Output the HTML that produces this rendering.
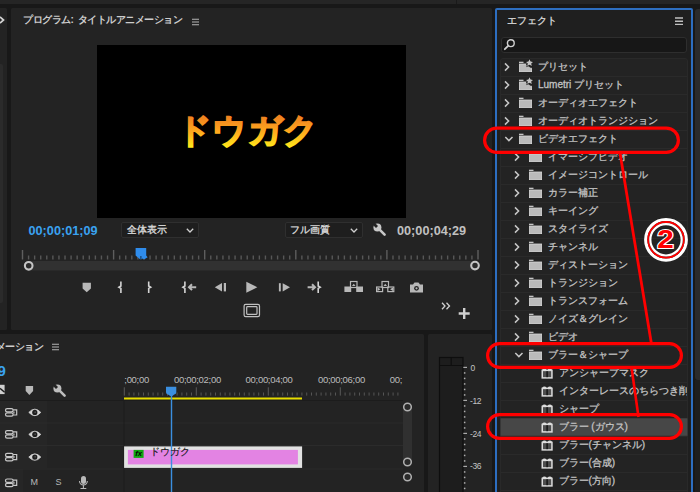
<!DOCTYPE html>
<html lang="ja"><head><meta charset="utf-8"><style>
*{margin:0;padding:0;box-sizing:border-box}
html,body{width:700px;height:492px;overflow:hidden;background:#181818;font-family:"Liberation Sans",sans-serif;color:#bdbdbd}
.a{position:absolute}
.p{position:absolute;background:#232323}
.t{position:absolute;white-space:nowrap;line-height:1}
svg{position:absolute;overflow:visible}
</style></head>
<body>
<div class="a" style="left:0px;top:0px;width:700px;height:4px;background:#252525;"></div>
<div class="a" style="left:456px;top:0px;width:1px;height:4px;background:#1a1a1a;"></div>
<div class="a" style="left:0px;top:8px;width:7px;height:322px;background:#232323;border-radius:0 1.5px 1.5px 0"></div>
<div class="a" style="left:0px;top:64px;width:2.5px;height:239px;background:#2b2b2b;border-radius:0 2px 2px 0"></div>
<svg style="left:0px;top:15.5px;" width="6" height="10" viewBox="0 0 6 10"><path d="M0 1 L3.5 4 L0 7" stroke="#d4d4d4" stroke-width="1.7" fill="none"/></svg>
<div class="a" style="left:10.5px;top:8px;width:481.5px;height:322px;background:#232323;border-radius:1.5px"></div>
<div class="t" style="left:23px;top:15.2px;font-size:10px;color:#cccccc;font-weight:bold;letter-spacing:-0.5px">プログラム:&nbsp; タイトルアニメーション</div>
<svg style="left:192px;top:18px;" width="8" height="8" viewBox="0 0 8 8"><path d="M0 1.3h7M0 4.05h7M0 6.8h7" stroke="#b5b5b5" stroke-width="1.1"/></svg>
<div class="a" style="left:97px;top:45px;width:309px;height:173px;background:#000;"></div>
<svg style="left:0px;top:0px;" width="700" height="492" viewBox="0 0 700 492"><defs><linearGradient id="dg" x1="0" y1="116" x2="0" y2="147" gradientUnits="userSpaceOnUse"><stop offset="0" stop-color="#ee8020"/><stop offset="0.5" stop-color="#ffa81e"/><stop offset="1" stop-color="#ffe81a"/></linearGradient></defs><text x="176.8" y="142.3" font-family="Liberation Sans, sans-serif" font-weight="bold" font-size="34" letter-spacing="0.5" fill="url(#dg)" stroke="url(#dg)" stroke-width="1.6">ドウガク</text></svg>
<div class="t" style="left:28.5px;top:224.9px;font-size:12.7px;color:#3aa2f0;font-weight:bold">00;00;01;09</div>
<div class="a" style="left:121px;top:222px;width:78px;height:15.5px;background:#1e1e1e;border:1px solid #2f2f2f;border-radius:2px"></div>
<div class="t" style="left:127px;top:224.5px;font-size:10px;color:#dcdcdc;-webkit-text-stroke:0.3px #dcdcdc">全体表示</div>
<svg style="left:186px;top:227.5px;" width="9" height="5" viewBox="0 0 9 5"><path d="M0.8 0.8 L4 4 L7.2 0.8" stroke="#cfcfcf" stroke-width="1.3" fill="none"/></svg>
<div class="a" style="left:284.5px;top:222px;width:78px;height:15.5px;background:#1e1e1e;border:1px solid #2f2f2f;border-radius:2px"></div>
<div class="t" style="left:290px;top:224.5px;font-size:10px;color:#dcdcdc;-webkit-text-stroke:0.3px #dcdcdc">フル画質</div>
<svg style="left:349.5px;top:227.5px;" width="9" height="5" viewBox="0 0 9 5"><path d="M0.8 0.8 L4 4 L7.2 0.8" stroke="#cfcfcf" stroke-width="1.3" fill="none"/></svg>
<svg style="left:373px;top:223px;" width="14" height="13" viewBox="0 0 14 13"><circle cx="4.4" cy="4.4" r="4" fill="#c8c8c8"/><path d="M4.6 4.6 L11.6 11.6" stroke="#c8c8c8" stroke-width="2.6" stroke-linecap="round"/><path d="M-0.5 -0.5 L4 4" stroke="#232323" stroke-width="2.8"/></svg>
<div class="t" style="left:397px;top:224.9px;font-size:12.7px;color:#c0c0c0;font-weight:bold">00;00;04;29</div>
<svg style="left:0px;top:0px;" width="492" height="330" viewBox="0 0 492 330"><rect x="21.80" y="250" width="1.4" height="9.5" fill="#5e5e5e"/><rect x="27.87" y="255.5" width="1.4" height="4" fill="#575757"/><rect x="33.95" y="255.5" width="1.4" height="4" fill="#575757"/><rect x="40.02" y="255.5" width="1.4" height="4" fill="#575757"/><rect x="46.09" y="255.5" width="1.4" height="4" fill="#575757"/><rect x="52.17" y="255.5" width="1.4" height="4" fill="#575757"/><rect x="58.24" y="255.5" width="1.4" height="4" fill="#575757"/><rect x="64.31" y="255.5" width="1.4" height="4" fill="#575757"/><rect x="70.39" y="255.5" width="1.4" height="4" fill="#575757"/><rect x="76.46" y="255.5" width="1.4" height="4" fill="#575757"/><rect x="82.53" y="255.5" width="1.4" height="4" fill="#575757"/><rect x="88.61" y="255.5" width="1.4" height="4" fill="#575757"/><rect x="94.68" y="255.5" width="1.4" height="4" fill="#575757"/><rect x="100.75" y="255.5" width="1.4" height="4" fill="#575757"/><rect x="106.83" y="255.5" width="1.4" height="4" fill="#575757"/><rect x="112.90" y="250" width="1.4" height="9.5" fill="#5e5e5e"/><rect x="118.97" y="255.5" width="1.4" height="4" fill="#575757"/><rect x="125.05" y="255.5" width="1.4" height="4" fill="#575757"/><rect x="131.12" y="255.5" width="1.4" height="4" fill="#575757"/><rect x="137.19" y="255.5" width="1.4" height="4" fill="#575757"/><rect x="143.27" y="255.5" width="1.4" height="4" fill="#575757"/><rect x="149.34" y="255.5" width="1.4" height="4" fill="#575757"/><rect x="155.41" y="255.5" width="1.4" height="4" fill="#575757"/><rect x="161.49" y="255.5" width="1.4" height="4" fill="#575757"/><rect x="167.56" y="255.5" width="1.4" height="4" fill="#575757"/><rect x="173.63" y="255.5" width="1.4" height="4" fill="#575757"/><rect x="179.71" y="255.5" width="1.4" height="4" fill="#575757"/><rect x="185.78" y="255.5" width="1.4" height="4" fill="#575757"/><rect x="191.85" y="255.5" width="1.4" height="4" fill="#575757"/><rect x="197.93" y="255.5" width="1.4" height="4" fill="#575757"/><rect x="204.00" y="250" width="1.4" height="9.5" fill="#5e5e5e"/><rect x="210.07" y="255.5" width="1.4" height="4" fill="#575757"/><rect x="216.15" y="255.5" width="1.4" height="4" fill="#575757"/><rect x="222.22" y="255.5" width="1.4" height="4" fill="#575757"/><rect x="228.29" y="255.5" width="1.4" height="4" fill="#575757"/><rect x="234.37" y="255.5" width="1.4" height="4" fill="#575757"/><rect x="240.44" y="255.5" width="1.4" height="4" fill="#575757"/><rect x="246.51" y="255.5" width="1.4" height="4" fill="#575757"/><rect x="252.59" y="255.5" width="1.4" height="4" fill="#575757"/><rect x="258.66" y="255.5" width="1.4" height="4" fill="#575757"/><rect x="264.73" y="255.5" width="1.4" height="4" fill="#575757"/><rect x="270.81" y="255.5" width="1.4" height="4" fill="#575757"/><rect x="276.88" y="255.5" width="1.4" height="4" fill="#575757"/><rect x="282.95" y="255.5" width="1.4" height="4" fill="#575757"/><rect x="289.03" y="255.5" width="1.4" height="4" fill="#575757"/><rect x="295.10" y="250" width="1.4" height="9.5" fill="#5e5e5e"/><rect x="301.17" y="255.5" width="1.4" height="4" fill="#575757"/><rect x="307.25" y="255.5" width="1.4" height="4" fill="#575757"/><rect x="313.32" y="255.5" width="1.4" height="4" fill="#575757"/><rect x="319.39" y="255.5" width="1.4" height="4" fill="#575757"/><rect x="325.47" y="255.5" width="1.4" height="4" fill="#575757"/><rect x="331.54" y="255.5" width="1.4" height="4" fill="#575757"/><rect x="337.61" y="255.5" width="1.4" height="4" fill="#575757"/><rect x="343.69" y="255.5" width="1.4" height="4" fill="#575757"/><rect x="349.76" y="255.5" width="1.4" height="4" fill="#575757"/><rect x="355.83" y="255.5" width="1.4" height="4" fill="#575757"/><rect x="361.91" y="255.5" width="1.4" height="4" fill="#575757"/><rect x="367.98" y="255.5" width="1.4" height="4" fill="#575757"/><rect x="374.05" y="255.5" width="1.4" height="4" fill="#575757"/><rect x="380.13" y="255.5" width="1.4" height="4" fill="#575757"/><rect x="386.20" y="250" width="1.4" height="9.5" fill="#5e5e5e"/><rect x="392.27" y="255.5" width="1.4" height="4" fill="#575757"/><rect x="398.35" y="255.5" width="1.4" height="4" fill="#575757"/><rect x="404.42" y="255.5" width="1.4" height="4" fill="#575757"/><rect x="410.49" y="255.5" width="1.4" height="4" fill="#575757"/><rect x="416.57" y="255.5" width="1.4" height="4" fill="#575757"/><rect x="422.64" y="255.5" width="1.4" height="4" fill="#575757"/><rect x="428.71" y="255.5" width="1.4" height="4" fill="#575757"/><rect x="434.79" y="255.5" width="1.4" height="4" fill="#575757"/><rect x="440.86" y="255.5" width="1.4" height="4" fill="#575757"/><rect x="446.93" y="255.5" width="1.4" height="4" fill="#575757"/><rect x="453.01" y="255.5" width="1.4" height="4" fill="#575757"/><rect x="459.08" y="255.5" width="1.4" height="4" fill="#575757"/><rect x="465.15" y="255.5" width="1.4" height="4" fill="#575757"/><rect x="471.23" y="255.5" width="1.4" height="4" fill="#575757"/><rect x="477.30" y="250" width="1.4" height="9.5" fill="#5e5e5e"/><rect x="29" y="261" width="446" height="9.5" fill="#313131"/><circle cx="28.7" cy="265.8" r="3.8" stroke="#c4c4c4" stroke-width="2.1" fill="#2a2a2a"/><circle cx="475" cy="265.6" r="3.8" stroke="#c4c4c4" stroke-width="2.1" fill="#2a2a2a"/><path d="M135.6 248.1 H146.2 V255.5 L147.6 257.2 L144 259.6 L142.6 258.4 L141.6 259.3 L140 259.3 L135.6 255.5 Z" fill="#2f8ceb"/><rect x="140.4" y="256" width="1" height="3.3" fill="#16324f"/></svg>
<svg style="left:0px;top:0px;" width="492" height="330" viewBox="0 0 492 330"><path d="M82.6 282.8 H90.9 V288.5 L86.75 292.3 L82.6 288.5 Z" fill="#b8b8b8"/><path d="M120.9 281.5 V286 L118.9 287.2 L120.9 288.4 V293" stroke="#d4d4d4" stroke-width="1.6" fill="none"/><path d="M148.70000000000002 281.5 V286 L150.70000000000002 287.2 L148.70000000000002 288.4 V293" stroke="#d4d4d4" stroke-width="1.6" fill="none"/><path d="M184.9 281.5 V286 L182.9 287.2 L184.9 288.4 V293" stroke="#d4d4d4" stroke-width="1.6" fill="none"/><path d="M196.2 287.2 H189.5 M192 284.3 L189 287.2 L192 290.1" stroke="#b8b8b8" stroke-width="2" fill="none"/><path d="M222 283 V291.4 L214.8 287.2 Z" fill="#b8b8b8"/><rect x="223.8" y="283" width="2.2" height="8.4" fill="#b8b8b8"/><path d="M246.3 281.8 V292.7 L257.3 287.25 Z" fill="#b8b8b8"/><rect x="278.9" y="283.2" width="1.9" height="8.2" fill="#b8b8b8"/><path d="M282.7 283.2 V291.4 L290 287.3 Z" fill="#b8b8b8"/><path d="M307.6 287.2 H314.5 M312 284.3 L315 287.2 L312 290.1" stroke="#b8b8b8" stroke-width="2" fill="none"/><path d="M318.2 281.5 V286 L320.2 287.2 L318.2 288.4 V293" stroke="#d4d4d4" stroke-width="1.6" fill="none"/><rect x="350.5" y="281.5" width="6.5" height="6" fill="none" stroke="#b8b8b8" stroke-width="1.2"/><path d="M352 286 L353.75 283.8 L355.5 286Z" fill="#b8b8b8"/><rect x="344.4" y="286.5" width="6.8" height="5.5" fill="#b8b8b8"/><rect x="356.2" y="286.5" width="6.8" height="5.5" fill="#b8b8b8"/><rect x="382" y="281.5" width="6.5" height="6" fill="none" stroke="#b8b8b8" stroke-width="1.2"/><path d="M383.5 286 L385.25 283.8 L387 286Z" fill="#b8b8b8"/><rect x="376.6" y="287" width="6" height="4.6" fill="none" stroke="#b8b8b8" stroke-width="1.2"/><rect x="387.8" y="287" width="6" height="4.6" fill="none" stroke="#b8b8b8" stroke-width="1.2"/><path d="M377.5 287.5 L380.5 289.3 L377.5 291Z M393 287.5 L390 289.3 L393 291Z" fill="#b8b8b8"/><path d="M410 284.5 H413 L414.5 282.5 H418.5 L420 284.5 H423 V292.6 H410 Z" fill="#b8b8b8"/><circle cx="416.5" cy="288.3" r="2.4" fill="#232323"/><circle cx="416.5" cy="288.3" r="1.1" fill="#b8b8b8"/><rect x="244.1" y="304.3" width="15.4" height="12.3" rx="1.6" fill="none" stroke="#c0c0c0" stroke-width="1.2"/><rect x="246.7" y="306.7" width="10.3" height="7.6" rx="0.8" fill="none" stroke="#c0c0c0" stroke-width="1.2"/><path d="M442 302.8 L445 306 L442 309.2 M446.5 302.8 L449.5 306 L446.5 309.2" stroke="#d0d0d0" stroke-width="1.3" fill="none"/><path d="M464.2 308 V319 M458.7 313.5 H469.7" stroke="#d0d0d0" stroke-width="2.4"/></svg>
<div class="a" style="left:0px;top:334px;width:424px;height:158px;background:#232323;border-radius:0 1.5px 0 0"></div>
<div class="t" style="left:-62px;top:341.5px;font-size:10px;color:#cccccc;font-weight:bold;letter-spacing:-0.4px">タイトルアニメーション</div>
<svg style="left:52px;top:343px;" width="8" height="8" viewBox="0 0 8 8"><path d="M0 1.3h7M0 4.05h7M0 6.8h7" stroke="#b5b5b5" stroke-width="1.1"/></svg>
<div class="t" style="left:-76px;top:363.3px;font-size:15px;color:#3aa2f0;font-weight:bold">00;00;01;09</div>
<svg style="left:53px;top:384px;" width="14" height="14" viewBox="0 0 14 14"><circle cx="4.4" cy="4.4" r="4" fill="#bdbdbd"/><path d="M4.6 4.6 L11.6 11.6" stroke="#bdbdbd" stroke-width="2.6" stroke-linecap="round"/><path d="M-0.5 -0.5 L4 4" stroke="#232323" stroke-width="2.8"/></svg>
<svg style="left:0px;top:0px;" width="424" height="492" viewBox="0 0 424 492"><path d="M0 384.8 H4.6 V394.1 H0 Z" fill="#d0d0d0"/><path d="M0 388.2 L4.6 392.2" stroke="#1a1a1a" stroke-width="1.4"/><path d="M25.7 386 H33.1 V391 L29.4 394.9 L25.7 391 Z" fill="#b8b8b8"/><rect x="0" y="401" width="47" height="67" fill="#262626"/><rect x="0" y="469" width="23" height="23" fill="#262626"/><rect x="0" y="400" width="403" height="1" fill="#1c1c1c"/><rect x="0" y="422.5" width="403" height="1" fill="#2b2b2b"/><rect x="0" y="445" width="403" height="1" fill="#2b2b2b"/><rect x="0" y="468.5" width="403" height="1" fill="#2b2b2b"/><rect x="123.5" y="400" width="1" height="92" fill="#1c1c1c"/><rect x="123.80" y="387.3" width="1" height="8.3" fill="#5a5a5a"/><rect x="128.60" y="392.5" width="1" height="3.1" fill="#555"/><rect x="133.40" y="392.5" width="1" height="3.1" fill="#555"/><rect x="138.20" y="392.5" width="1" height="3.1" fill="#555"/><rect x="143.00" y="392.5" width="1" height="3.1" fill="#555"/><rect x="147.80" y="392.5" width="1" height="3.1" fill="#555"/><rect x="152.60" y="392.5" width="1" height="3.1" fill="#555"/><rect x="157.40" y="392.5" width="1" height="3.1" fill="#555"/><rect x="162.20" y="392.5" width="1" height="3.1" fill="#555"/><rect x="167.00" y="392.5" width="1" height="3.1" fill="#555"/><rect x="171.80" y="392.5" width="1" height="3.1" fill="#555"/><rect x="176.60" y="392.5" width="1" height="3.1" fill="#555"/><rect x="181.40" y="392.5" width="1" height="3.1" fill="#555"/><rect x="186.20" y="392.5" width="1" height="3.1" fill="#555"/><rect x="191.00" y="392.5" width="1" height="3.1" fill="#555"/><rect x="195.80" y="387.3" width="1" height="8.3" fill="#5a5a5a"/><rect x="200.60" y="392.5" width="1" height="3.1" fill="#555"/><rect x="205.40" y="392.5" width="1" height="3.1" fill="#555"/><rect x="210.20" y="392.5" width="1" height="3.1" fill="#555"/><rect x="215.00" y="392.5" width="1" height="3.1" fill="#555"/><rect x="219.80" y="392.5" width="1" height="3.1" fill="#555"/><rect x="224.60" y="392.5" width="1" height="3.1" fill="#555"/><rect x="229.40" y="392.5" width="1" height="3.1" fill="#555"/><rect x="234.20" y="392.5" width="1" height="3.1" fill="#555"/><rect x="239.00" y="392.5" width="1" height="3.1" fill="#555"/><rect x="243.80" y="392.5" width="1" height="3.1" fill="#555"/><rect x="248.60" y="392.5" width="1" height="3.1" fill="#555"/><rect x="253.40" y="392.5" width="1" height="3.1" fill="#555"/><rect x="258.20" y="392.5" width="1" height="3.1" fill="#555"/><rect x="263.00" y="392.5" width="1" height="3.1" fill="#555"/><rect x="267.80" y="387.3" width="1" height="8.3" fill="#5a5a5a"/><rect x="272.60" y="392.5" width="1" height="3.1" fill="#555"/><rect x="277.40" y="392.5" width="1" height="3.1" fill="#555"/><rect x="282.20" y="392.5" width="1" height="3.1" fill="#555"/><rect x="287.00" y="392.5" width="1" height="3.1" fill="#555"/><rect x="291.80" y="392.5" width="1" height="3.1" fill="#555"/><rect x="296.60" y="392.5" width="1" height="3.1" fill="#555"/><rect x="301.40" y="392.5" width="1" height="3.1" fill="#555"/><rect x="306.20" y="392.5" width="1" height="3.1" fill="#555"/><rect x="311.00" y="392.5" width="1" height="3.1" fill="#555"/><rect x="315.80" y="392.5" width="1" height="3.1" fill="#555"/><rect x="320.60" y="392.5" width="1" height="3.1" fill="#555"/><rect x="325.40" y="392.5" width="1" height="3.1" fill="#555"/><rect x="330.20" y="392.5" width="1" height="3.1" fill="#555"/><rect x="335.00" y="392.5" width="1" height="3.1" fill="#555"/><rect x="339.80" y="387.3" width="1" height="8.3" fill="#5a5a5a"/><rect x="344.60" y="392.5" width="1" height="3.1" fill="#555"/><rect x="349.40" y="392.5" width="1" height="3.1" fill="#555"/><rect x="354.20" y="392.5" width="1" height="3.1" fill="#555"/><rect x="359.00" y="392.5" width="1" height="3.1" fill="#555"/><rect x="363.80" y="392.5" width="1" height="3.1" fill="#555"/><rect x="368.60" y="392.5" width="1" height="3.1" fill="#555"/><rect x="373.40" y="392.5" width="1" height="3.1" fill="#555"/><rect x="378.20" y="392.5" width="1" height="3.1" fill="#555"/><rect x="383.00" y="392.5" width="1" height="3.1" fill="#555"/><rect x="387.80" y="392.5" width="1" height="3.1" fill="#555"/><rect x="392.60" y="392.5" width="1" height="3.1" fill="#555"/><rect x="397.40" y="392.5" width="1" height="3.1" fill="#555"/><rect x="124" y="397.5" width="178" height="2" fill="#e6dc00"/><rect x="124.1" y="446.4" width="178" height="21.5" fill="#e2e2e2"/><rect x="127.9" y="449.9" width="170" height="14.5" fill="#e383e3"/><rect x="133.6" y="449.9" width="10" height="8" fill="#12a812"/><rect x="403" y="403" width="9" height="63" rx="4.5" fill="#303030"/><circle cx="407.5" cy="407" r="3.8" stroke="#b0b0b0" stroke-width="1.5" fill="#2a2a2a"/><circle cx="407.5" cy="462" r="3.8" stroke="#b0b0b0" stroke-width="1.5" fill="#2a2a2a"/><circle cx="407.5" cy="477" r="3.8" stroke="#b0b0b0" stroke-width="1.5" fill="#2a2a2a"/><rect x="5.5" y="408.59999999999997" width="7.6" height="3.3" rx="1.6" fill="none" stroke="#c8c8c8" stroke-width="1.2"/><rect x="5.5" y="412.9" width="7.6" height="3.3" rx="1.6" fill="none" stroke="#c8c8c8" stroke-width="1.2"/><path d="M13.1 409.79999999999995 H16.7 V415.0 H13.1 M13.9 411.4 V413.4" fill="none" stroke="#c8c8c8" stroke-width="1.2"/><path d="M28.799999999999997 412.4 Q34.8 405.9 40.8 412.4 Q34.8 418.9 28.799999999999997 412.4 Z" fill="#d4d4d4" stroke="#d4d4d4" stroke-width="0.8"/><circle cx="34.8" cy="412.4" r="2.6" fill="#1e1e1e"/><circle cx="35.099999999999994" cy="412.09999999999997" r="0.6" fill="#888"/><rect x="5.5" y="430.59999999999997" width="7.6" height="3.3" rx="1.6" fill="none" stroke="#c8c8c8" stroke-width="1.2"/><rect x="5.5" y="434.9" width="7.6" height="3.3" rx="1.6" fill="none" stroke="#c8c8c8" stroke-width="1.2"/><path d="M13.1 431.79999999999995 H16.7 V437.0 H13.1 M13.9 433.4 V435.4" fill="none" stroke="#c8c8c8" stroke-width="1.2"/><path d="M28.799999999999997 434.4 Q34.8 427.9 40.8 434.4 Q34.8 440.9 28.799999999999997 434.4 Z" fill="#d4d4d4" stroke="#d4d4d4" stroke-width="0.8"/><circle cx="34.8" cy="434.4" r="2.6" fill="#1e1e1e"/><circle cx="35.099999999999994" cy="434.09999999999997" r="0.6" fill="#888"/><rect x="5.5" y="453.3" width="7.6" height="3.3" rx="1.6" fill="none" stroke="#c8c8c8" stroke-width="1.2"/><rect x="5.5" y="457.6" width="7.6" height="3.3" rx="1.6" fill="none" stroke="#c8c8c8" stroke-width="1.2"/><path d="M13.1 454.5 H16.7 V459.70000000000005 H13.1 M13.9 456.1 V458.1" fill="none" stroke="#c8c8c8" stroke-width="1.2"/><path d="M28.799999999999997 457.1 Q34.8 450.6 40.8 457.1 Q34.8 463.6 28.799999999999997 457.1 Z" fill="#d4d4d4" stroke="#d4d4d4" stroke-width="0.8"/><circle cx="34.8" cy="457.1" r="2.6" fill="#1e1e1e"/><circle cx="35.099999999999994" cy="456.8" r="0.6" fill="#888"/><rect x="5.5" y="479.0" width="7.6" height="3.3" rx="1.6" fill="none" stroke="#c8c8c8" stroke-width="1.2"/><rect x="5.5" y="483.3" width="7.6" height="3.3" rx="1.6" fill="none" stroke="#c8c8c8" stroke-width="1.2"/><path d="M13.1 480.2 H16.7 V485.40000000000003 H13.1 M13.9 481.8 V483.8" fill="none" stroke="#c8c8c8" stroke-width="1.2"/><rect x="170.8" y="392" width="1.4" height="100" fill="#3b8fe0"/><path d="M166 386.7 H176.3 V392.3 Q176.3 394 174.3 394.6 L172.3 396 H170.4 L168 394.6 Q166 394 166 392.3 Z" fill="#3b8fe0"/></svg>
<div class="t" style="left:30.5px;top:478px;font-size:9px;color:#b8b8b8;">M</div>
<div class="t" style="left:55.5px;top:478px;font-size:9px;color:#b8b8b8;">S</div>
<svg style="left:0px;top:0px;" width="100" height="492" viewBox="0 0 100 492"><rect x="81" y="476" width="5" height="8" rx="2.5" fill="#b8b8b8"/><path d="M79.5 481 A3.9 3.9 0 0 0 87.3 481 M83.4 485 V488 M80.5 488.5 H86.3" stroke="#b8b8b8" stroke-width="1.1" fill="none"/></svg>
<div class="t" style="left:124.3px;top:375px;font-size:9.5px;color:#bdbdbd;letter-spacing:-0.3px">;00;00</div>
<div class="t" style="left:174px;top:375px;font-size:9.5px;color:#bdbdbd;letter-spacing:-0.3px">00;00;02;00</div>
<div class="t" style="left:245.6px;top:375px;font-size:9.5px;color:#bdbdbd;letter-spacing:-0.3px">00;00;04;00</div>
<div class="t" style="left:318px;top:375px;font-size:9.5px;color:#bdbdbd;letter-spacing:-0.3px">00;00;06;00</div>
<div class="t" style="left:389.7px;top:375px;font-size:9.5px;color:#bdbdbd;letter-spacing:-0.3px">00;</div>
<div class="t" style="left:149.5px;top:447px;font-size:10px;color:#181818;-webkit-text-stroke:0.15px #181818">ドウガク</div>
<div class="t" style="left:135.2px;top:450.3px;font-size:7.5px;color:#050505;font-style:italic;font-weight:bold">fx</div>
<div class="a" style="left:427.5px;top:334px;width:64.5px;height:158px;background:#232323;border-radius:1.5px 1.5px 0 0"></div>
<svg style="left:0px;top:0px;" width="492" height="492" viewBox="0 0 492 492"><rect x="439.5" y="357.5" width="23.5" height="140" fill="#1d1d1d" stroke="#0e0e0e" stroke-width="1.2"/><path d="M439.5 365.5 H463 M451.2 357.5 V365.5" stroke="#0e0e0e" stroke-width="1.2"/><rect x="463.3" y="366.80" width="3.7" height="1.2" fill="#aaa"/><rect x="463.9" y="372.20" width="1.5" height="1.5" fill="#b0b0b0"/><rect x="463.9" y="377.70" width="1.5" height="1.5" fill="#b0b0b0"/><rect x="463.9" y="383.20" width="1.5" height="1.5" fill="#b0b0b0"/><rect x="463.9" y="388.70" width="1.5" height="1.5" fill="#b0b0b0"/><rect x="463.9" y="394.20" width="1.5" height="1.5" fill="#b0b0b0"/><rect x="463.3" y="399.80" width="3.7" height="1.2" fill="#aaa"/><rect x="463.9" y="405.20" width="1.5" height="1.5" fill="#b0b0b0"/><rect x="463.9" y="410.70" width="1.5" height="1.5" fill="#b0b0b0"/><rect x="463.9" y="416.20" width="1.5" height="1.5" fill="#b0b0b0"/><rect x="463.9" y="421.70" width="1.5" height="1.5" fill="#b0b0b0"/><rect x="463.9" y="427.20" width="1.5" height="1.5" fill="#b0b0b0"/><rect x="463.3" y="432.80" width="3.7" height="1.2" fill="#aaa"/><rect x="463.9" y="438.20" width="1.5" height="1.5" fill="#b0b0b0"/><rect x="463.9" y="443.70" width="1.5" height="1.5" fill="#b0b0b0"/><rect x="463.9" y="449.20" width="1.5" height="1.5" fill="#b0b0b0"/><rect x="463.9" y="454.70" width="1.5" height="1.5" fill="#b0b0b0"/><rect x="463.9" y="460.20" width="1.5" height="1.5" fill="#b0b0b0"/><rect x="463.3" y="465.80" width="3.7" height="1.2" fill="#aaa"/><rect x="463.9" y="471.20" width="1.5" height="1.5" fill="#b0b0b0"/><rect x="463.9" y="476.70" width="1.5" height="1.5" fill="#b0b0b0"/><rect x="463.9" y="482.20" width="1.5" height="1.5" fill="#b0b0b0"/><rect x="463.9" y="487.70" width="1.5" height="1.5" fill="#b0b0b0"/></svg>
<div class="t" style="left:470.5px;top:364.3px;font-size:8.5px;color:#c4c4c4;">0</div>
<div class="t" style="left:470px;top:396.8px;font-size:8.5px;color:#c4c4c4;letter-spacing:-0.4px">-12</div>
<div class="t" style="left:470px;top:429.8px;font-size:8.5px;color:#c4c4c4;letter-spacing:-0.4px">-24</div>
<div class="t" style="left:470px;top:462.3px;font-size:8.5px;color:#c4c4c4;letter-spacing:-0.4px">-36</div>
<div class="a" style="left:695px;top:380px;width:10px;height:112px;background:#1e1e1e;"></div>
<div class="a" style="left:695px;top:9px;width:10px;height:371px;background:#2b2b2b;border-radius:3px 0 0 3px"></div>
<div class="a" style="left:495px;top:8px;width:198.2px;height:490px;background:#1f1f1f;border:2px solid #2d6ec0;border-radius:2px 2px 0 0"></div>
<div class="t" style="left:507px;top:15.5px;font-size:10px;color:#cccccc;font-weight:bold">エフェクト</div>
<svg style="left:675px;top:17px;" width="9" height="9" viewBox="0 0 9 9"><path d="M0 1h8M0 4.2h8M0 7.4h8" stroke="#c0c0c0" stroke-width="1.4"/></svg>
<div class="a" style="left:500.5px;top:36.5px;width:186px;height:16.5px;background:#171717;border:1px solid #2e2e2e;border-radius:3px"></div>
<svg style="left:503px;top:38px;" width="13" height="13" viewBox="0 0 13 13"><circle cx="7.8" cy="5.2" r="3.4" stroke="#d0d0d0" stroke-width="1.4" fill="none"/><path d="M5.4 7.6 L1.8 11.2" stroke="#d0d0d0" stroke-width="1.8" stroke-linecap="round"/></svg>
<div class="a" style="left:500px;top:57.5px;width:187.5px;height:440px;background:#232323;border:1px solid #292929;border-radius:3px 3px 0 0"></div>
<svg style="left:0px;top:0px;" width="700" height="492" viewBox="0 0 700 492"><rect x="501" y="76" width="186" height="1" fill="#2a2a2a"/><path d="M505 63.4 L508.6 67 L505 70.6" stroke="#c8c8c8" stroke-width="1.5" fill="none"/><rect x="519" y="61.7" width="4.5" height="1.3" fill="#c4c4c4"/><rect x="519.4" y="64" width="12.2" height="7.6" fill="#bababa" stroke="#d8d8d8" stroke-width="0.8"/><path d="M526.5 63.8 L532 67.2" stroke="#232323" stroke-width="2.2"/><path d="M529.5 59.3 L530.6 61.599999999999994 L533 61.9 L531.2 63.599999999999994 L531.8 66.0 L529.5 64.8 L527.2 66.0 L527.8 63.599999999999994 L526 61.9 L528.4 61.599999999999994 Z" fill="#c4c4c4" stroke="#1c1c1c" stroke-width="1.2" paint-order="stroke"/><rect x="501" y="94" width="186" height="1" fill="#2a2a2a"/><path d="M505 81.4 L508.6 85 L505 88.6" stroke="#c8c8c8" stroke-width="1.5" fill="none"/><rect x="519" y="79.7" width="4.5" height="1.3" fill="#c4c4c4"/><rect x="519.4" y="82" width="12.2" height="7.6" fill="#bababa" stroke="#d8d8d8" stroke-width="0.8"/><path d="M526.5 81.8 L532 85.2" stroke="#232323" stroke-width="2.2"/><path d="M529.5 77.3 L530.6 79.6 L533 79.89999999999999 L531.2 81.6 L531.8 84.0 L529.5 82.8 L527.2 84.0 L527.8 81.6 L526 79.89999999999999 L528.4 79.6 Z" fill="#c4c4c4" stroke="#1c1c1c" stroke-width="1.2" paint-order="stroke"/><rect x="501" y="112" width="186" height="1" fill="#2a2a2a"/><path d="M505 99.4 L508.6 103 L505 106.6" stroke="#c8c8c8" stroke-width="1.5" fill="none"/><rect x="519" y="97.7" width="4.5" height="1.3" fill="#c4c4c4"/><rect x="519.4" y="100" width="12.2" height="7.6" fill="#bababa" stroke="#d8d8d8" stroke-width="0.8"/><rect x="501" y="130" width="186" height="1" fill="#2a2a2a"/><path d="M505 117.4 L508.6 121 L505 124.6" stroke="#c8c8c8" stroke-width="1.5" fill="none"/><rect x="519" y="115.7" width="4.5" height="1.3" fill="#c4c4c4"/><rect x="519.4" y="118" width="12.2" height="7.6" fill="#bababa" stroke="#d8d8d8" stroke-width="0.8"/><rect x="501" y="148" width="186" height="1" fill="#2a2a2a"/><path d="M505.3 137 L508.9 140.6 L512.5 137" stroke="#c8c8c8" stroke-width="1.5" fill="none"/><rect x="519" y="133.7" width="4.5" height="1.3" fill="#c4c4c4"/><rect x="519.4" y="136" width="12.2" height="7.6" fill="#bababa" stroke="#d8d8d8" stroke-width="0.8"/><rect x="501" y="166" width="186" height="1" fill="#2a2a2a"/><path d="M515 153.4 L518.6 157 L515 160.6" stroke="#c8c8c8" stroke-width="1.5" fill="none"/><rect x="529" y="151.7" width="4.5" height="1.3" fill="#c4c4c4"/><rect x="529.4" y="154" width="12.2" height="7.6" fill="#bababa" stroke="#d8d8d8" stroke-width="0.8"/><rect x="501" y="184" width="186" height="1" fill="#2a2a2a"/><path d="M515 171.4 L518.6 175 L515 178.6" stroke="#c8c8c8" stroke-width="1.5" fill="none"/><rect x="529" y="169.7" width="4.5" height="1.3" fill="#c4c4c4"/><rect x="529.4" y="172" width="12.2" height="7.6" fill="#bababa" stroke="#d8d8d8" stroke-width="0.8"/><rect x="501" y="202" width="186" height="1" fill="#2a2a2a"/><path d="M515 189.4 L518.6 193 L515 196.6" stroke="#c8c8c8" stroke-width="1.5" fill="none"/><rect x="529" y="187.7" width="4.5" height="1.3" fill="#c4c4c4"/><rect x="529.4" y="190" width="12.2" height="7.6" fill="#bababa" stroke="#d8d8d8" stroke-width="0.8"/><rect x="501" y="220" width="186" height="1" fill="#2a2a2a"/><path d="M515 207.4 L518.6 211 L515 214.6" stroke="#c8c8c8" stroke-width="1.5" fill="none"/><rect x="529" y="205.7" width="4.5" height="1.3" fill="#c4c4c4"/><rect x="529.4" y="208" width="12.2" height="7.6" fill="#bababa" stroke="#d8d8d8" stroke-width="0.8"/><rect x="501" y="238" width="186" height="1" fill="#2a2a2a"/><path d="M515 225.4 L518.6 229 L515 232.6" stroke="#c8c8c8" stroke-width="1.5" fill="none"/><rect x="529" y="223.7" width="4.5" height="1.3" fill="#c4c4c4"/><rect x="529.4" y="226" width="12.2" height="7.6" fill="#bababa" stroke="#d8d8d8" stroke-width="0.8"/><rect x="501" y="256" width="186" height="1" fill="#2a2a2a"/><path d="M515 243.4 L518.6 247 L515 250.6" stroke="#c8c8c8" stroke-width="1.5" fill="none"/><rect x="529" y="241.7" width="4.5" height="1.3" fill="#c4c4c4"/><rect x="529.4" y="244" width="12.2" height="7.6" fill="#bababa" stroke="#d8d8d8" stroke-width="0.8"/><rect x="501" y="274" width="186" height="1" fill="#2a2a2a"/><path d="M515 261.4 L518.6 265 L515 268.6" stroke="#c8c8c8" stroke-width="1.5" fill="none"/><rect x="529" y="259.7" width="4.5" height="1.3" fill="#c4c4c4"/><rect x="529.4" y="262" width="12.2" height="7.6" fill="#bababa" stroke="#d8d8d8" stroke-width="0.8"/><rect x="501" y="292" width="186" height="1" fill="#2a2a2a"/><path d="M515 279.4 L518.6 283 L515 286.6" stroke="#c8c8c8" stroke-width="1.5" fill="none"/><rect x="529" y="277.7" width="4.5" height="1.3" fill="#c4c4c4"/><rect x="529.4" y="280" width="12.2" height="7.6" fill="#bababa" stroke="#d8d8d8" stroke-width="0.8"/><rect x="501" y="310" width="186" height="1" fill="#2a2a2a"/><path d="M515 297.4 L518.6 301 L515 304.6" stroke="#c8c8c8" stroke-width="1.5" fill="none"/><rect x="529" y="295.7" width="4.5" height="1.3" fill="#c4c4c4"/><rect x="529.4" y="298" width="12.2" height="7.6" fill="#bababa" stroke="#d8d8d8" stroke-width="0.8"/><rect x="501" y="328" width="186" height="1" fill="#2a2a2a"/><path d="M515 315.4 L518.6 319 L515 322.6" stroke="#c8c8c8" stroke-width="1.5" fill="none"/><rect x="529" y="313.7" width="4.5" height="1.3" fill="#c4c4c4"/><rect x="529.4" y="316" width="12.2" height="7.6" fill="#bababa" stroke="#d8d8d8" stroke-width="0.8"/><rect x="501" y="346" width="186" height="1" fill="#2a2a2a"/><path d="M515 333.4 L518.6 337 L515 340.6" stroke="#c8c8c8" stroke-width="1.5" fill="none"/><rect x="529" y="331.7" width="4.5" height="1.3" fill="#c4c4c4"/><rect x="529.4" y="334" width="12.2" height="7.6" fill="#bababa" stroke="#d8d8d8" stroke-width="0.8"/><rect x="501" y="364" width="186" height="1" fill="#2a2a2a"/><path d="M515.3 353 L518.9 356.6 L522.5 353" stroke="#c8c8c8" stroke-width="1.5" fill="none"/><rect x="529" y="349.7" width="4.5" height="1.3" fill="#c4c4c4"/><rect x="529.4" y="352" width="12.2" height="7.6" fill="#bababa" stroke="#d8d8d8" stroke-width="0.8"/><rect x="501" y="382" width="186" height="1" fill="#2a2a2a"/><rect x="542.25" y="370.4" width="9.7" height="7.5" fill="#4e4e4e" stroke="#dcdcdc" stroke-width="1.5"/><rect x="546.4" y="371.2" width="1.4" height="6" fill="#111"/><path d="M542.5 370.4 Q544.4 368 546.3 370.4 M547.9 370.4 Q549.8 368 551.7 370.4" stroke="#dcdcdc" stroke-width="1.4" fill="none"/><rect x="501" y="400" width="186" height="1" fill="#2a2a2a"/><rect x="542.25" y="388.4" width="9.7" height="7.5" fill="#4e4e4e" stroke="#dcdcdc" stroke-width="1.5"/><rect x="546.4" y="389.2" width="1.4" height="6" fill="#111"/><path d="M542.5 388.4 Q544.4 386 546.3 388.4 M547.9 388.4 Q549.8 386 551.7 388.4" stroke="#dcdcdc" stroke-width="1.4" fill="none"/><rect x="501" y="418" width="186" height="1" fill="#2a2a2a"/><rect x="542.25" y="406.4" width="9.7" height="7.5" fill="#4e4e4e" stroke="#dcdcdc" stroke-width="1.5"/><rect x="546.4" y="407.2" width="1.4" height="6" fill="#111"/><path d="M542.5 406.4 Q544.4 404 546.3 406.4 M547.9 406.4 Q549.8 404 551.7 406.4" stroke="#dcdcdc" stroke-width="1.4" fill="none"/><rect x="500.5" y="418.3" width="187" height="17.5" fill="#474747"/><rect x="501" y="436" width="186" height="1" fill="#2a2a2a"/><rect x="542.25" y="424.4" width="9.7" height="7.5" fill="#4e4e4e" stroke="#dcdcdc" stroke-width="1.5"/><rect x="546.4" y="425.2" width="1.4" height="6" fill="#111"/><path d="M542.5 424.4 Q544.4 422 546.3 424.4 M547.9 424.4 Q549.8 422 551.7 424.4" stroke="#dcdcdc" stroke-width="1.4" fill="none"/><rect x="501" y="454" width="186" height="1" fill="#2a2a2a"/><rect x="542.25" y="442.4" width="9.7" height="7.5" fill="#4e4e4e" stroke="#dcdcdc" stroke-width="1.5"/><rect x="546.4" y="443.2" width="1.4" height="6" fill="#111"/><path d="M542.5 442.4 Q544.4 440 546.3 442.4 M547.9 442.4 Q549.8 440 551.7 442.4" stroke="#dcdcdc" stroke-width="1.4" fill="none"/><rect x="501" y="472" width="186" height="1" fill="#2a2a2a"/><rect x="542.25" y="460.4" width="9.7" height="7.5" fill="#4e4e4e" stroke="#dcdcdc" stroke-width="1.5"/><rect x="546.4" y="461.2" width="1.4" height="6" fill="#111"/><path d="M542.5 460.4 Q544.4 458 546.3 460.4 M547.9 460.4 Q549.8 458 551.7 460.4" stroke="#dcdcdc" stroke-width="1.4" fill="none"/><rect x="501" y="490" width="186" height="1" fill="#2a2a2a"/><rect x="542.25" y="478.4" width="9.7" height="7.5" fill="#4e4e4e" stroke="#dcdcdc" stroke-width="1.5"/><rect x="546.4" y="479.2" width="1.4" height="6" fill="#111"/><path d="M542.5 478.4 Q544.4 476 546.3 478.4 M547.9 478.4 Q549.8 476 551.7 478.4" stroke="#dcdcdc" stroke-width="1.4" fill="none"/></svg>
<div class="a" style="left:500px;top:58px;width:187px;height:434px;overflow:hidden">
<div class="t" style="left:38px;top:4px;font-size:10px;color:#c2c2c2;-webkit-text-stroke:0.3px #c2c2c2">プリセット</div>
<div class="t" style="left:38px;top:22px;font-size:10px;color:#c2c2c2;-webkit-text-stroke:0.3px #c2c2c2">Lumetri プリセット</div>
<div class="t" style="left:38px;top:40px;font-size:10px;color:#c2c2c2;-webkit-text-stroke:0.3px #c2c2c2">オーディオエフェクト</div>
<div class="t" style="left:38px;top:58px;font-size:10px;color:#c2c2c2;-webkit-text-stroke:0.3px #c2c2c2">オーディオトランジション</div>
<div class="t" style="left:38px;top:76px;font-size:10px;color:#c2c2c2;-webkit-text-stroke:0.3px #c2c2c2">ビデオエフェクト</div>
<div class="t" style="left:48px;top:94px;font-size:10px;color:#c2c2c2;-webkit-text-stroke:0.3px #c2c2c2">イマーシブビデオ</div>
<div class="t" style="left:48px;top:112px;font-size:10px;color:#c2c2c2;-webkit-text-stroke:0.3px #c2c2c2">イメージコントロール</div>
<div class="t" style="left:48px;top:130px;font-size:10px;color:#c2c2c2;-webkit-text-stroke:0.3px #c2c2c2">カラー補正</div>
<div class="t" style="left:48px;top:148px;font-size:10px;color:#c2c2c2;-webkit-text-stroke:0.3px #c2c2c2">キーイング</div>
<div class="t" style="left:48px;top:166px;font-size:10px;color:#c2c2c2;-webkit-text-stroke:0.3px #c2c2c2">スタイライズ</div>
<div class="t" style="left:48px;top:184px;font-size:10px;color:#c2c2c2;-webkit-text-stroke:0.3px #c2c2c2">チャンネル</div>
<div class="t" style="left:48px;top:202px;font-size:10px;color:#c2c2c2;-webkit-text-stroke:0.3px #c2c2c2">ディストーション</div>
<div class="t" style="left:48px;top:220px;font-size:10px;color:#c2c2c2;-webkit-text-stroke:0.3px #c2c2c2">トランジション</div>
<div class="t" style="left:48px;top:238px;font-size:10px;color:#c2c2c2;-webkit-text-stroke:0.3px #c2c2c2">トランスフォーム</div>
<div class="t" style="left:48px;top:256px;font-size:10px;color:#c2c2c2;-webkit-text-stroke:0.3px #c2c2c2">ノイズ＆グレイン</div>
<div class="t" style="left:48px;top:274px;font-size:10px;color:#c2c2c2;-webkit-text-stroke:0.3px #c2c2c2">ビデオ</div>
<div class="t" style="left:48px;top:292px;font-size:10px;color:#c2c2c2;-webkit-text-stroke:0.3px #c2c2c2">ブラー＆シャープ</div>
<div class="t" style="left:58.5px;top:310px;font-size:10px;color:#c2c2c2;-webkit-text-stroke:0.3px #c2c2c2">アンシャープマスク</div>
<div class="t" style="left:58.5px;top:328px;font-size:10px;color:#c2c2c2;-webkit-text-stroke:0.3px #c2c2c2">インターレースのちらつき削除</div>
<div class="t" style="left:58.5px;top:346px;font-size:10px;color:#c2c2c2;-webkit-text-stroke:0.3px #c2c2c2">シャープ</div>
<div class="t" style="left:58.5px;top:364px;font-size:10px;color:#c2c2c2;-webkit-text-stroke:0.3px #c2c2c2">ブラー (ガウス)</div>
<div class="t" style="left:58.5px;top:382px;font-size:10px;color:#c2c2c2;-webkit-text-stroke:0.3px #c2c2c2">ブラー(チャンネル)</div>
<div class="t" style="left:58.5px;top:400px;font-size:10px;color:#c2c2c2;-webkit-text-stroke:0.3px #c2c2c2">ブラー(合成)</div>
<div class="t" style="left:58.5px;top:418px;font-size:10px;color:#c2c2c2;-webkit-text-stroke:0.3px #c2c2c2">ブラー(方向)</div>
</div>
<svg style="left:0px;top:0px;" width="700" height="492" viewBox="0 0 700 492"><rect x="484.6" y="128.1" width="193.8" height="24.3" rx="12.15" fill="none" stroke="#ff0000" stroke-width="3.2"/><rect x="487.6" y="343.6" width="193.8" height="23.8" rx="11.9" fill="none" stroke="#ff0000" stroke-width="3.2"/><rect x="487.6" y="414.6" width="193.8" height="23.8" rx="11.9" fill="none" stroke="#ff0000" stroke-width="3.2"/><path d="M620 153 L651.3 343" stroke="#ff0000" stroke-width="2.8"/><path d="M631.6 368 L638.5 417" stroke="#ff0000" stroke-width="2.6"/><circle cx="666" cy="239.8" r="20.3" fill="none" stroke="#fff" stroke-width="3.2"/><circle cx="666" cy="239.8" r="17.8" fill="none" stroke="#ff0000" stroke-width="1.8"/><circle cx="666" cy="239.8" r="15.7" fill="none" stroke="#fff" stroke-width="2.2"/></svg>
<svg style="left:0px;top:0px;" width="700" height="492" viewBox="0 0 700 492"><text x="0" y="0" font-family="Liberation Sans, sans-serif" font-size="26.5" font-weight="bold" fill="#ff0000" stroke="#fff" stroke-width="2.2" paint-order="stroke" text-anchor="middle" transform="translate(665.6,248.2) scale(1.12,1)">2</text></svg>
</body></html>
